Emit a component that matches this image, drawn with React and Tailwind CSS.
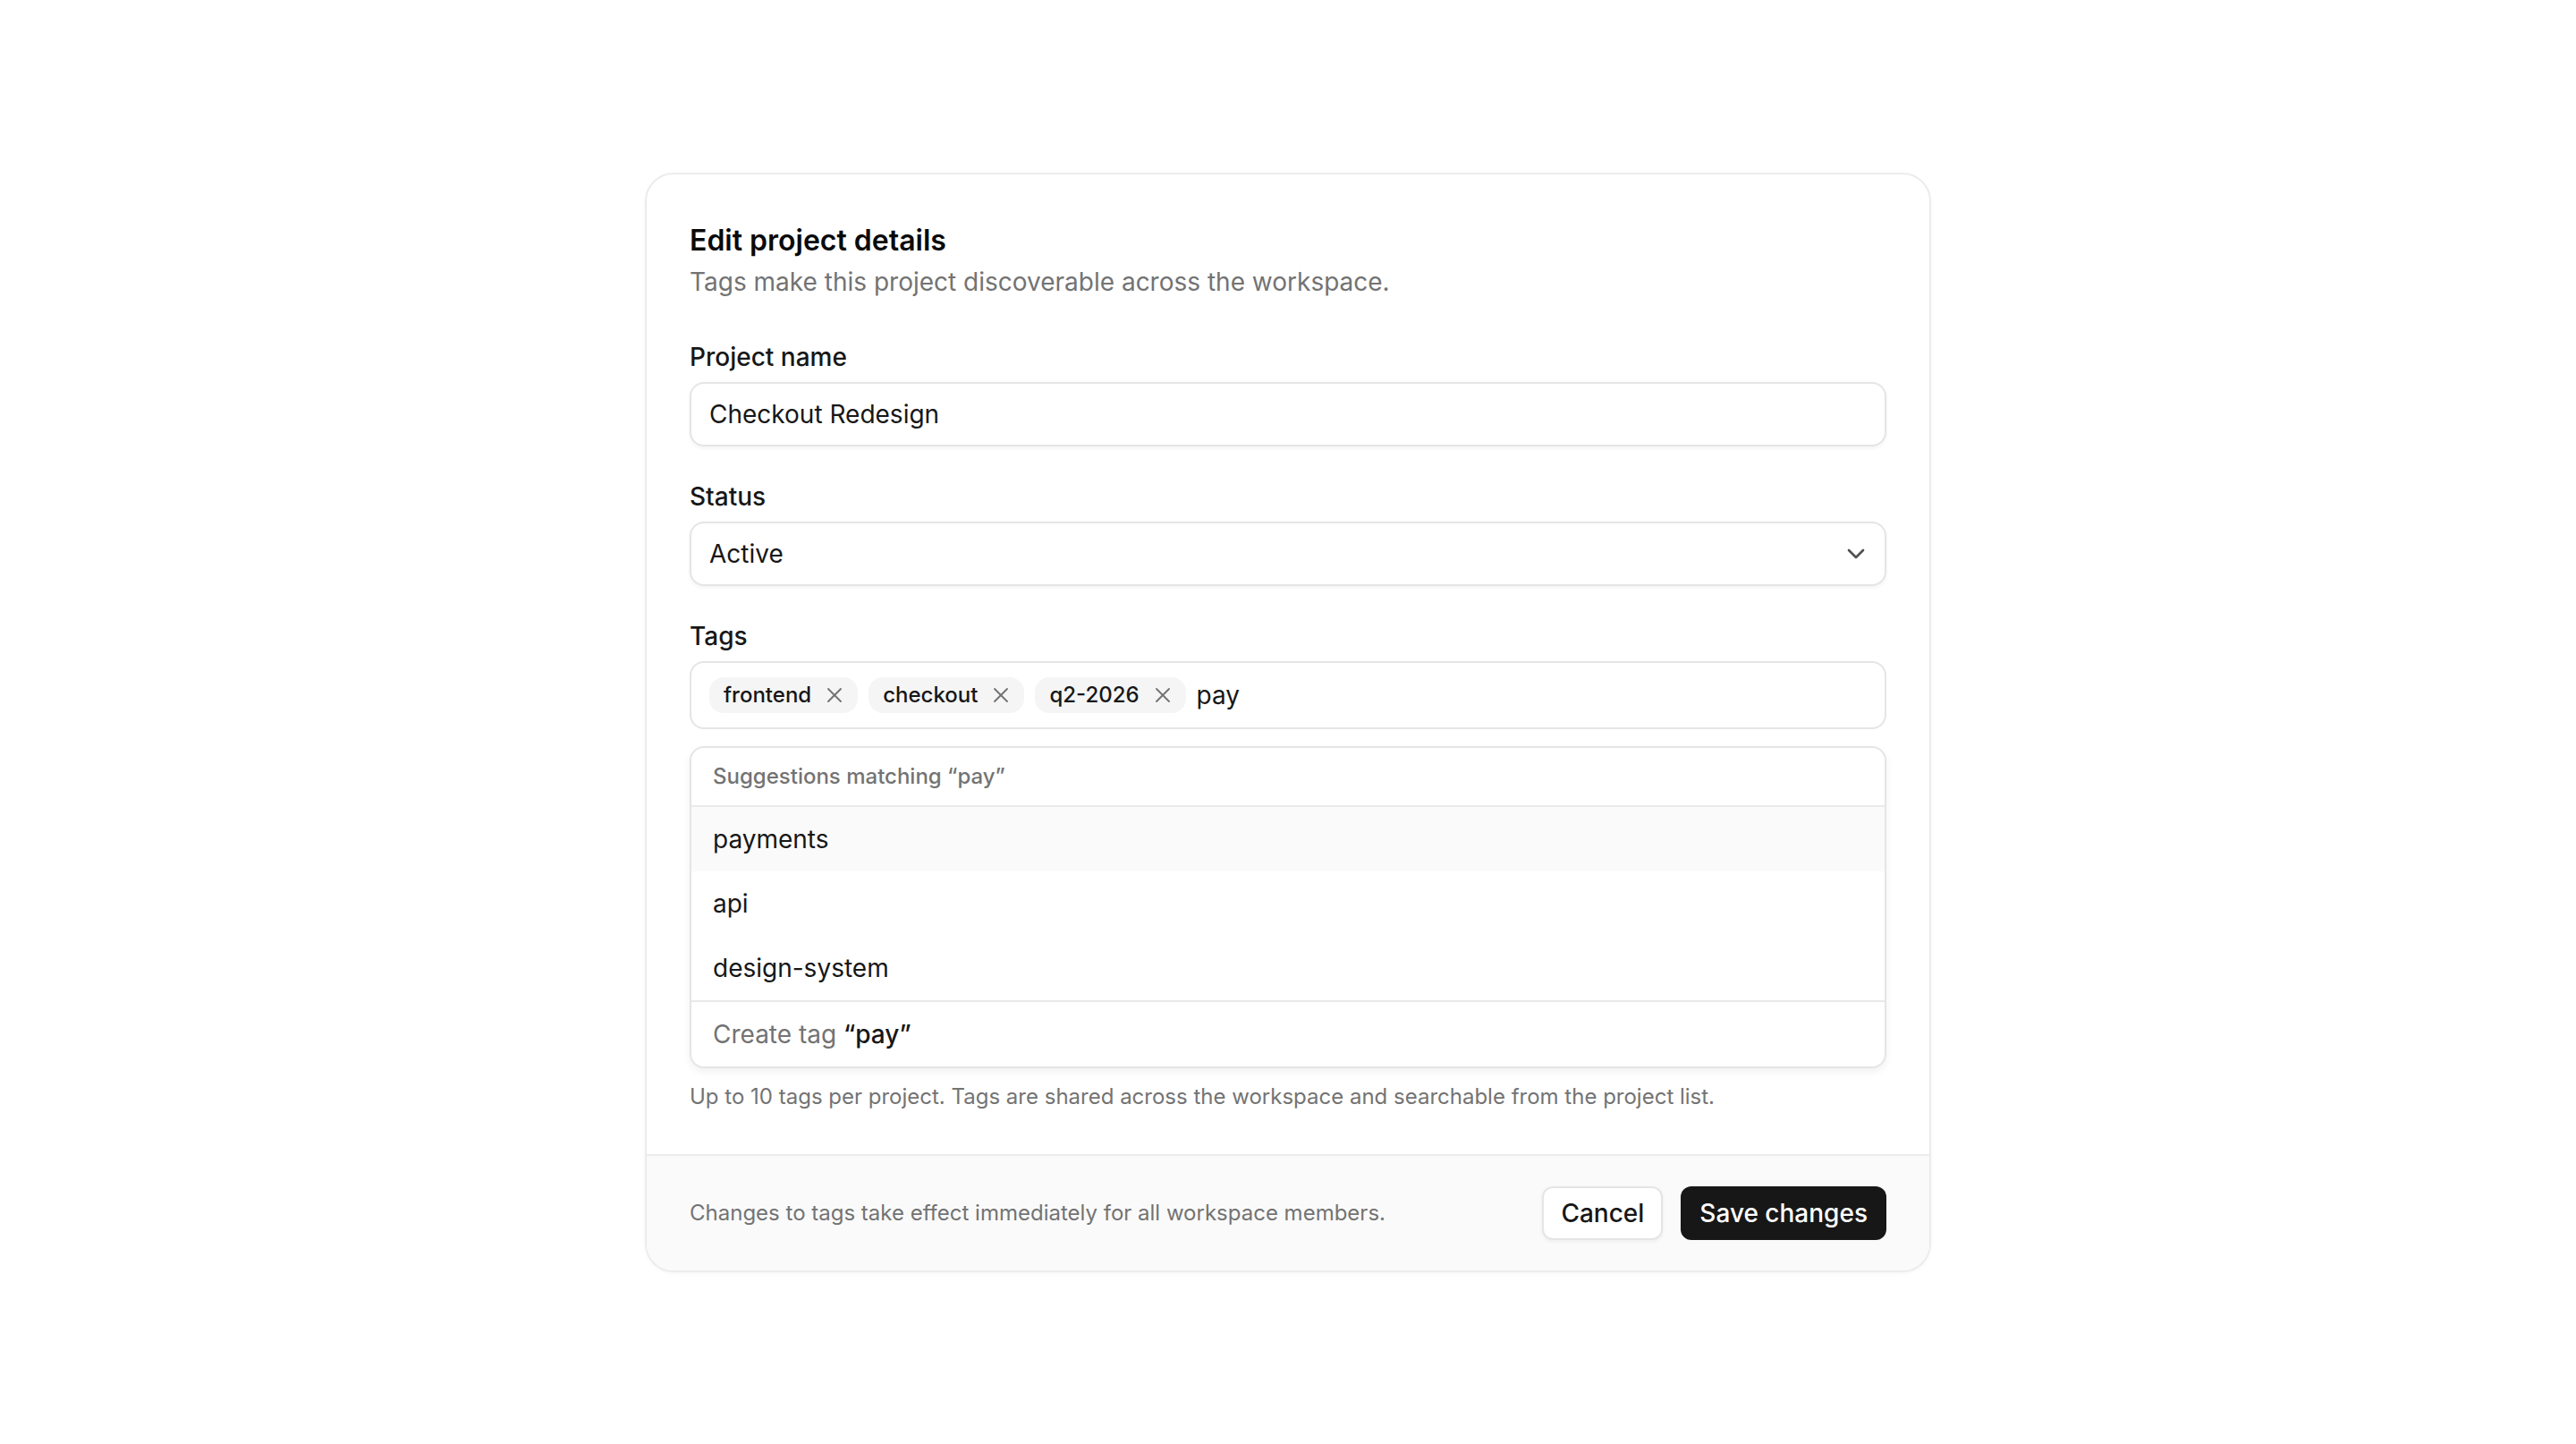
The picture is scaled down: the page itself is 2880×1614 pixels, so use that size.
import { ChevronDown, X } from 'lucide-react'

const tags = ['frontend', 'checkout', 'q2-2026']
const suggestions = ['payments', 'api', 'design-system']

const Label = ({ children }) => (
  <label className="mb-2 block text-[28px] leading-[40px] font-medium text-neutral-900">{children}</label>
)

export default function App() {
  return (
    <div className="flex min-h-screen items-center justify-center bg-white font-['Inter',sans-serif] text-neutral-900">
      <div className="w-[1438px] overflow-hidden rounded-[32px] border-2 border-[#ececec] bg-white shadow-[0_2px_4px_rgba(0,0,0,0.03)]">
        <div className="px-12 pt-[50px] pb-12">
          {/* Header */}
          <h2 className="text-[32px] leading-[48px] font-semibold text-neutral-950">Edit project details</h2>
          <p className="mt-0.5 text-[28px] leading-[40px] text-neutral-500">
            Tags make this project discoverable across the workspace.
          </p>

          <div className="mt-11 space-y-9">
            {/* Project name */}
            <div>
              <Label>Project name</Label>
              <div className="flex h-[72px] items-center rounded-2xl border-2 border-neutral-200 bg-white px-5 text-[28px] shadow-[0_2px_4px_rgba(0,0,0,0.05)]">
                Checkout Redesign
              </div>
            </div>

            {/* Status */}
            <div>
              <Label>Status</Label>
              <div className="flex h-[72px] items-center justify-between rounded-2xl border-2 border-neutral-200 bg-white pr-4 pl-5 text-[28px] shadow-[0_2px_4px_rgba(0,0,0,0.05)]">
                <span>Active</span>
                <ChevronDown className="h-8 w-8 text-neutral-600" strokeWidth={2} />
              </div>
            </div>

            {/* Tags */}
            <div>
              <Label>Tags</Label>
              <div className="flex flex-wrap items-center gap-3 rounded-2xl border-2 border-neutral-200 bg-white px-5 py-4">
                {tags.map((t) => (
                  <span
                    key={t}
                    className="flex h-10 items-center gap-3 rounded-2xl bg-neutral-100 pr-3 pl-4 text-[24px] font-medium text-neutral-900"
                  >
                    {t}
                    <X className="h-7 w-7 text-neutral-500" strokeWidth={1.6} />
                  </span>
                ))}
                <span className="text-[28px] leading-[40px] text-neutral-900">pay</span>
              </div>

              {/* Suggestions */}
              <div className="mt-[19px] overflow-hidden rounded-2xl border-2 border-neutral-200 bg-white shadow-[0_4px_10px_rgba(0,0,0,0.06)]">
                <div className="border-b-2 border-neutral-200/80 px-6 py-4 text-[24px] leading-8 font-medium text-neutral-500">
                  Suggestions matching “pay”
                </div>
                {suggestions.map((s, i) => (
                  <div
                    key={s}
                    className={`flex h-[72px] items-center px-6 text-[28px] ${i === 0 ? 'bg-neutral-50' : ''}`}
                  >
                    {s}
                  </div>
                ))}
                <div className="flex h-[74px] items-center border-t-2 border-neutral-200/80 px-6 text-[28px] text-neutral-500">
                  Create tag&nbsp;<span className="font-medium text-neutral-900">“pay”</span>
                </div>
              </div>

              <p className="mt-4 text-[24px] leading-8 text-neutral-500">
                Up to 10 tags per project. Tags are shared across the workspace and searchable from the project list.
              </p>
            </div>
          </div>
        </div>

        {/* Footer */}
        <div className="flex items-center justify-between border-t-2 border-[#ececec] bg-neutral-50 px-12 py-[34px]">
          <p className="text-[24px] leading-8 text-neutral-500">
            Changes to tags take effect immediately for all workspace members.
          </p>
          <div className="flex items-center gap-5">
            <button className="h-[60px] rounded-xl border-2 border-neutral-200 bg-white px-[19px] text-[28px] font-medium text-neutral-900 shadow-[0_2px_4px_rgba(0,0,0,0.05)]">
              Cancel
            </button>
            <button className="h-[60px] rounded-xl bg-neutral-900 px-[21px] text-[28px] font-medium text-white">
              Save changes
            </button>
          </div>
        </div>
      </div>
    </div>
  )
}
